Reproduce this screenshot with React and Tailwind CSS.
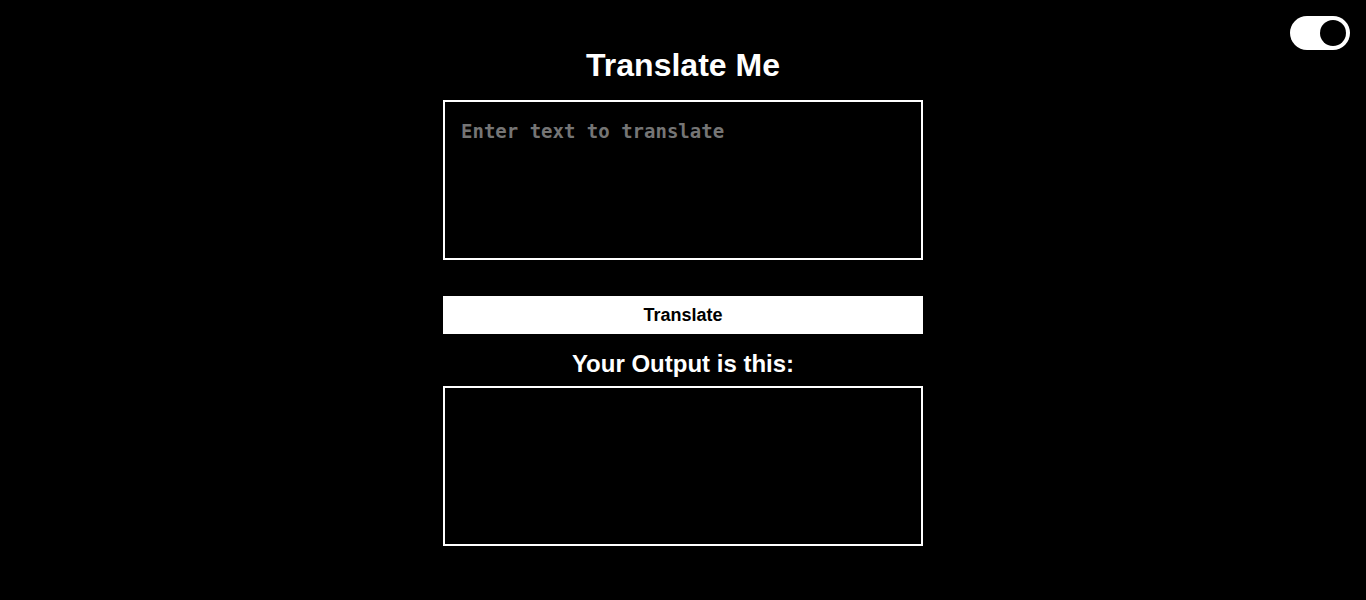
// App.jsx
const App = () => {
  return (
    <div className="relative min-h-screen bg-black text-white font-['Liberation_Sans',Arial,sans-serif]">
      {/* Theme toggle */}
      <button className="absolute top-4 right-4 w-[60px] h-[34px] rounded-full bg-white flex items-center justify-end pr-1">
        <span className="block w-[26px] h-[26px] rounded-full bg-black"></span>
      </button>

      <div className="flex flex-col items-center pt-[47px]">
        <h1 className="text-[32px] leading-[37px] font-bold mb-4">Translate Me</h1>

        <textarea
          placeholder="Enter text to translate"
          className="block w-[480px] h-[160px] border-2 border-white bg-black p-4 resize-none outline-none text-white placeholder:text-[#757575] font-['DejaVu_Sans_Mono',monospace] font-bold text-[19px] leading-[26px]"
        ></textarea>

        <button className="mt-9 w-[480px] h-[38px] bg-white text-black font-bold text-[18px]">
          Translate
        </button>

        <h2 className="mt-4 text-[24px] leading-[28px] font-bold">Your Output is this:</h2>

        <div className="mt-2 w-[480px] h-[160px] border-2 border-white"></div>
      </div>
    </div>
  );
};

export default App;
